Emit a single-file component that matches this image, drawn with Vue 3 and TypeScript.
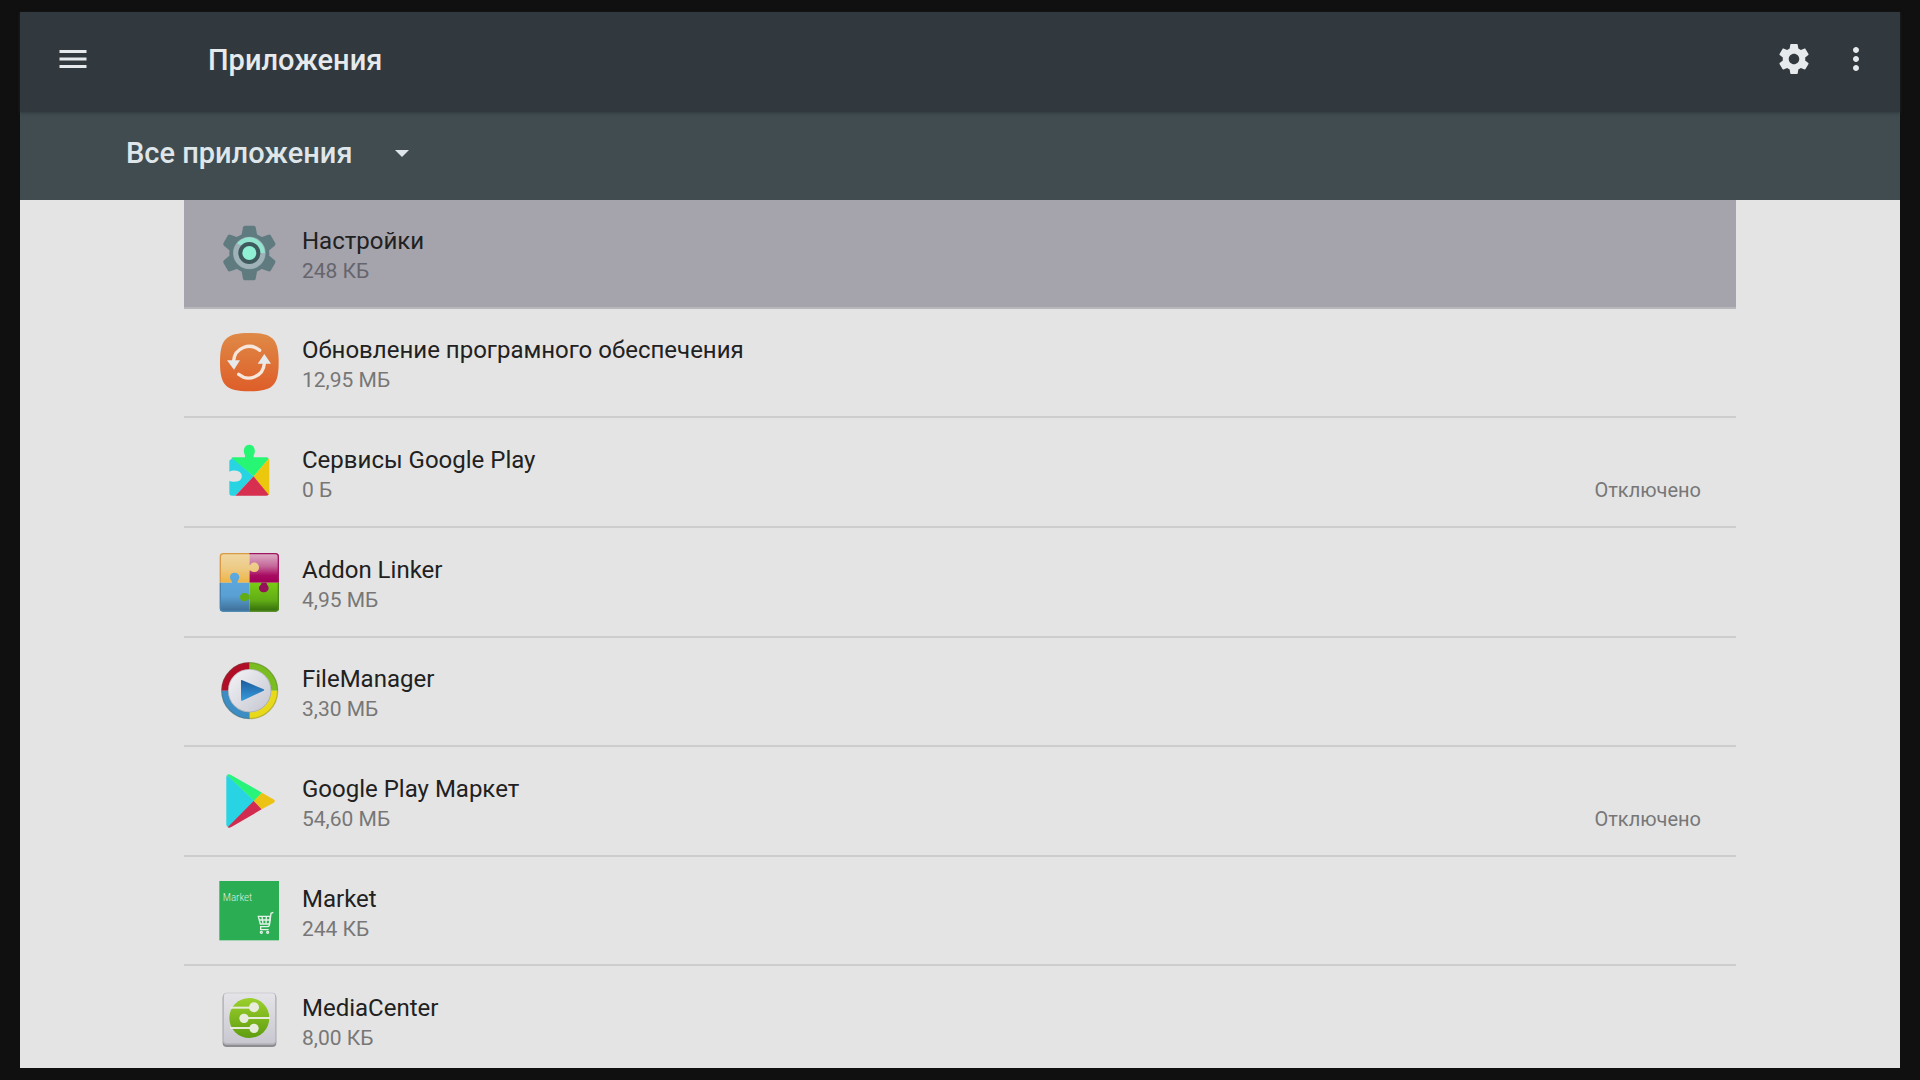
<script setup lang="ts">
import { ref } from 'vue'

type IconName = 'settings' | 'update' | 'services' | 'addon' | 'files' | 'play' | 'market' | 'media'

interface AppItem {
  icon: IconName
  name: string
  size: string
  status?: string
}

const apps: AppItem[] = [
  { icon: 'settings', name: 'Настройки', size: '248 КБ' },
  { icon: 'update', name: 'Обновление програмного обеспечения', size: '12,95 МБ' },
  { icon: 'services', name: 'Сервисы Google Play', size: '0 Б', status: 'Отключено' },
  { icon: 'addon', name: 'Addon Linker', size: '4,95 МБ' },
  { icon: 'files', name: 'FileManager', size: '3,30 МБ' },
  { icon: 'play', name: 'Google Play Маркет', size: '54,60 МБ', status: 'Отключено' },
  { icon: 'market', name: 'Market', size: '244 КБ' },
  { icon: 'media', name: 'MediaCenter', size: '8,00 КБ' },
]

const filters: string[] = ['Все приложения']
const filter = ref(filters[0])
const selected = ref(0)
</script>

<template>
  <div class="screen">
    <div class="window">
      <header class="toolbar">
        <button class="icon-button" type="button">
          <svg viewBox="0 0 24 24"><path d="M3 18h18v-2H3v2zm0-5h18v-2H3v2zm0-7v2h18V6H3z" /></svg>
        </button>
        <h1 class="title">Приложения</h1>
        <button class="icon-button" type="button">
          <svg viewBox="0 0 24 24"><path d="M19.43 12.98c.04-.32.07-.64.07-.98s-.03-.66-.07-.98l2.11-1.65c.19-.15.24-.42.12-.64l-2-3.46c-.12-.22-.39-.3-.61-.22l-2.49 1c-.52-.4-1.08-.73-1.69-.98l-.38-2.65C14.46 2.18 14.25 2 14 2h-4c-.25 0-.46.18-.49.42l-.38 2.65c-.61.25-1.17.59-1.69.98l-2.49-1c-.23-.09-.49 0-.61.22l-2 3.46c-.13.22-.07.49.12.64l2.11 1.65c-.04.32-.07.65-.07.98s.03.66.07.98l-2.11 1.65c-.19.15-.24.42-.12.64l2 3.46c.12.22.39.3.61.22l2.49-1c.52.4 1.08.73 1.69.98l.38 2.65c.03.24.24.42.49.42h4c.25 0 .46-.18.49-.42l.38-2.65c.61-.25 1.17-.59 1.69-.98l2.49 1c.23.09.49 0 .61-.22l2-3.46c.12-.22.07-.49-.12-.64l-2.11-1.65zM12 15.5c-1.93 0-3.5-1.57-3.5-3.5s1.57-3.5 3.5-3.5 3.5 1.57 3.5 3.5-1.57 3.5-3.5 3.5z" /></svg>
        </button>
        <button class="icon-button" type="button">
          <svg viewBox="0 0 24 24"><path d="M12 8c1.1 0 2-.9 2-2s-.9-2-2-2-2 .9-2 2 .9 2 2 2zm0 2c-1.1 0-2 .9-2 2s.9 2 2 2 2-.9 2-2-.9-2-2-2zm0 6c-1.1 0-2 .9-2 2s.9 2 2 2 2-.9 2-2-.9-2-2-2z" /></svg>
        </button>
      </header>

      <div class="filter-bar">
        <label class="filter">
          <select v-model="filter" class="filter-select">
            <option v-for="f in filters" :key="f" :value="f">{{ f }}</option>
          </select>
          <svg class="caret" viewBox="0 0 14 7"><path d="M0 0h14L7 7z" /></svg>
        </label>
      </div>

      <main class="content">
        <ul class="list">
          <li v-for="(app, i) in apps" :key="app.name" class="item">
            <button class="row" :class="{ selected: i === selected }" type="button" @click="selected = i">
              <svg v-if="app.icon === 'settings'" class="app-icon" viewBox="27 23 180 180">
                <g fill="#5f7b80">
                  <circle cx="118" cy="113" r="60" />
                  <g v-for="a in [0, 60, 120, 180, 240, 300]" :key="a" :transform="`rotate(${a} 118 113)`">
                    <path d="M99 36q1-5 6-5h26q5 0 6 5l5 27h-48z" />
                  </g>
                </g>
                <circle cx="118" cy="113" r="49" fill="#8f9fa6" />
                <circle cx="118" cy="113" r="40" fill="none" stroke="#9fb2b8" stroke-width="15" />
                <path d="M81 84A47 47 0 0 1 165 113H150A32 32 0 0 0 95 91z" fill="#92e4cf" />
                <circle cx="118" cy="113" r="33" fill="#3f5a5c" />
                <circle cx="118" cy="113" r="21" fill="#8ff0d4" />
              </svg>

              <svg v-else-if="app.icon === 'update'" class="app-icon" viewBox="27 36 180 180">
                <defs>
                  <linearGradient id="updateFill" x1="0" y1="0" x2="0" y2="1">
                    <stop offset="0" stop-color="#df8a47" />
                    <stop offset="1" stop-color="#de5d28" />
                  </linearGradient>
                </defs>
                <path d="M118 39C188 39 206 57 206 127S188 214 118 214 30 197 30 127 48 39 118 39z" fill="url(#updateFill)" />
                <g fill="none" stroke="#f6e6dc" stroke-width="10" stroke-linecap="round">
                  <path d="M149 91A47 47 0 0 0 71 122" />
                  <path d="M86 163A47 47 0 0 0 163 130" />
                </g>
                <path d="M51 121h39l-18 28zM143 131h40l-20-29z" fill="#e6eaec" />
              </svg>

              <svg v-else-if="app.icon === 'services'" class="app-icon" viewBox="27 35 180 180">
                <path d="M58 91L68 82 131 138 76 196H66Q58 196 58 188V151C65 155 78 156 88 151 98 144 98 131 88 124 78 119 65 120 58 124z" fill="#29d4e2" />
                <path d="M64 82Q66 81 70 81H105V74C98 64 101 43 118 43S138 64 131 74V81H168Q174 81 176 85L131 138z" fill="#27f574" />
                <path d="M176 85Q178 87 178 91V188Q178 192 175 194L131 138z" fill="#ebc80d" />
                <path d="M131 138L176 193Q173 196 168 196H76z" fill="#d62f50" />
              </svg>

              <svg v-else-if="app.icon === 'addon'" class="app-icon" viewBox="27 33 180 180">
                <defs>
                  <linearGradient id="addonYellow" x1="0" y1="0" x2="0" y2="1">
                    <stop offset="0" stop-color="#f0d7a4" /><stop offset="0.5" stop-color="#edcb86" /><stop offset="1" stop-color="#efb444" />
                  </linearGradient>
                  <linearGradient id="addonPink" x1="0" y1="0" x2="0" y2="1">
                    <stop offset="0" stop-color="#dfb3c8" /><stop offset="0.45" stop-color="#c46699" /><stop offset="0.75" stop-color="#a80c62" /><stop offset="1" stop-color="#a00058" />
                  </linearGradient>
                  <linearGradient id="addonBlue" x1="0" y1="0" x2="0" y2="1">
                    <stop offset="0" stop-color="#5aaae0" /><stop offset="0.6" stop-color="#5aa0d4" /><stop offset="1" stop-color="#3d6d94" />
                  </linearGradient>
                  <linearGradient id="addonGreen" x1="0" y1="0" x2="0" y2="1">
                    <stop offset="0" stop-color="#78cc14" /><stop offset="0.6" stop-color="#62ad16" /><stop offset="1" stop-color="#326a0c" />
                  </linearGradient>
                  <clipPath id="addonClip"><rect x="29" y="36" width="178" height="176" rx="10" /></clipPath>
                </defs>
                <g clip-path="url(#addonClip)">
                  <path d="M118 36H207V125H118z" fill="url(#addonPink)" />
                  <path d="M29 36H118V73C122 73 122 66 129 65 142 63 147 72 147 80S141 94 131 93C124 92 122 87 118 89V125H29z" fill="url(#addonYellow)" />
                  <path d="M118 125H207V212H118z" fill="url(#addonGreen)" />
                  <path d="M29 125H66C67 119 60 118 60 108 60 99 66 95 74 95S88 100 88 108C88 117 81 119 83 125H118V212H29z" fill="url(#addonBlue)" />
                  <path d="M119 161C113 162 112 156 105 156 96 155 90 161 90 168S94 181 104 181C112 180 114 174 119 175z" fill="#62ad16" />
                  <path d="M154 125C156 132 147 133 147 141 147 149 154 154 162 154S176 148 176 141C176 133 169 132 170 125z" fill="#96105a" />
                </g>
                <path d="M118 38H40Q31 38 31 47V124" fill="none" stroke="#d99a45" stroke-width="4" />
                <path d="M118 38H196Q205 38 205 47V124" fill="none" stroke="#a01660" stroke-width="4" />
                <path d="M31 125V201Q31 210 40 210H118" fill="none" stroke="#4481b0" stroke-width="4" />
                <path d="M118 210H196Q205 210 205 201V125" fill="none" stroke="#4d881b" stroke-width="4" />
              </svg>

              <svg v-else-if="app.icon === 'files'" class="app-icon" viewBox="27 33 180 180">
                <defs>
                  <linearGradient id="filesDisc" x1="0" y1="0" x2="1" y2="1">
                    <stop offset="0" stop-color="#f5f5f8" /><stop offset="1" stop-color="#c3c5cf" />
                  </linearGradient>
                  <linearGradient id="filesArrow" x1="0" y1="0" x2="0" y2="1">
                    <stop offset="0" stop-color="#1d5c9e" /><stop offset="1" stop-color="#369bdc" />
                  </linearGradient>
                </defs>
                <circle cx="119" cy="122" r="66" fill="url(#filesDisc)" />
                <g fill="none" stroke-width="20">
                  <path d="M44 122A75 75 0 0 1 119 47" stroke="#b20d27" />
                  <path d="M119 47A75 75 0 0 1 194 122" stroke="#79bd20" />
                  <path d="M194 122A75 75 0 0 1 119 197" stroke="#e8d91a" />
                  <path d="M119 197A75 75 0 0 1 44 122" stroke="#3c8dc3" />
                </g>
                <circle cx="119" cy="122" r="84" fill="none" stroke="#555b40" stroke-opacity="0.3" stroke-width="4" />
                <circle cx="119" cy="122" r="64" fill="none" stroke="#666" stroke-opacity="0.3" stroke-width="3" />
                <path d="M93 91Q94 89 97 91L161 118Q164 120 161 122L97 152Q93 153 93 150z" fill="url(#filesArrow)" />
              </svg>

              <svg v-else-if="app.icon === 'play'" class="app-icon" viewBox="27 31 180 180">
                <path d="M52 43L134 121 55 200Q49 198 49 191V50Q49 44 52 43z" fill="#28d3e3" />
                <path d="M51 43Q55 39 63 43L156 96 133 121z" fill="#29f47a" />
                <path d="M156 96L190 116Q199 121 190 127L155 146 131 121z" fill="#edc313" />
                <path d="M131 121L155 146 64 199Q57 203 53 200z" fill="#d22b4f" />
              </svg>

              <svg v-else-if="app.icon === 'market'" class="app-icon" viewBox="27 30 180 180">
                <rect x="28" y="30" width="179" height="178" fill="#2bad54" />
                <text class="market-text" x="38" y="90">Market</text>
                <g fill="none" stroke="#e3f3e7" stroke-width="4">
                  <path d="M190 124L183 127 178 163Q177 167 171 167H150" />
                  <path d="M145 136H181L178 159H151z" />
                  <path d="M147 147H179M156 137L159 158M169 137L168 158M152 167V176H176" />
                  <circle cx="154" cy="184" r="3" /><circle cx="173" cy="184" r="3" />
                </g>
              </svg>

              <svg v-else class="app-icon" viewBox="117 59 180 180">
                <defs>
                  <linearGradient id="mediaPlate" x1="0" y1="0" x2="0" y2="1">
                    <stop offset="0" stop-color="#e4e4e8" /><stop offset="1" stop-color="#c9c8d0" />
                  </linearGradient>
                  <linearGradient id="mediaGreen" x1="0" y1="0" x2="0" y2="1">
                    <stop offset="0" stop-color="#9bd02c" /><stop offset="1" stop-color="#5f9d10" />
                  </linearGradient>
                </defs>
                <rect x="128" y="70" width="161" height="160" rx="12" fill="#8d8c92" />
                <rect x="129" y="67" width="159" height="156" rx="11" fill="#b9b8be" />
                <rect x="132" y="69" width="153" height="149" rx="8" fill="url(#mediaPlate)" />
                <circle cx="208" cy="143" r="60" fill="url(#mediaGreen)" />
                <g fill="none" stroke="#e8ecdc" stroke-width="6">
                  <path d="M151 112H205L215 112" /><path d="M193 143H270" /><path d="M150 173H215" />
                </g>
                <g fill="#e8ecdc">
                  <circle cx="222" cy="111" r="15" /><circle cx="192" cy="144" r="14" /><circle cx="222" cy="174" r="14" />
                </g>
              </svg>

              <span class="texts">
                <span class="name">{{ app.name }}</span>
                <span class="details">
                  <span>{{ app.size }}</span>
                  <span v-if="app.status" class="status">{{ app.status }}</span>
                </span>
              </span>
            </button>
          </li>
        </ul>
      </main>
    </div>
  </div>
</template>

<style>
body {
  margin: 0;
  background: #101010;
}
</style>

<style scoped>
.screen {
  box-sizing: border-box;
  height: 100vh;
  padding: 12px 20px;
  background: #101010;
  font-family: Roboto, "Noto Sans", sans-serif;
}

.window {
  display: flex;
  flex-direction: column;
  height: 100%;
  background: #e4e4e4;
}

button {
  border: 0;
  padding: 0;
  background: none;
  font: inherit;
  color: inherit;
  cursor: pointer;
}

.toolbar {
  position: relative;
  z-index: 2;
  box-sizing: border-box;
  display: flex;
  align-items: center;
  flex: none;
  height: 100px;
  padding: 0 26px 6px 35px;
  background: #32393e;
  color: #e6eaed;
  box-shadow: 0 1px 3px rgba(40, 48, 52, 0.7);
}

.icon-button {
  width: 36px;
  height: 36px;
}

.icon-button + .icon-button {
  margin-left: 26px;
}

.icon-button svg {
  display: block;
  width: 36px;
  height: 36px;
  fill: currentColor;
}

.title {
  flex: 1;
  margin: 2px 0 0 117px;
  font-size: 29px;
  font-weight: 500;
  line-height: 36px;
}

.filter-bar {
  position: relative;
  z-index: 1;
  box-sizing: border-box;
  display: flex;
  align-items: center;
  flex: none;
  height: 88px;
  padding: 0 106px 6px;
  background: #404c50;
  color: #dfe6ea;
}

.filter {
  display: flex;
  align-items: center;
  gap: 42px;
}

.filter-select {
  appearance: none;
  border: 0;
  padding: 0;
  background: none;
  color: inherit;
  font-family: inherit;
  font-size: 29px;
  font-weight: 500;
  line-height: 36px;
}

.caret {
  width: 14px;
  height: 7px;
  fill: currentColor;
}

.content {
  display: flex;
  flex: 1;
  min-height: 0;
  padding: 0 164px;
  overflow: hidden;
}

.list {
  display: grid;
  grid-auto-rows: minmax(84px, 1fr);
  flex: 1;
  margin: -1px 0 -8px;
  padding: 0;
  list-style: none;
}

.item {
  display: flex;
}

.row {
  display: flex;
  align-items: center;
  gap: 23px;
  flex: 1;
  padding: 0 35px;
  border-bottom: 2px solid #cdcdcd;
  color: #212121;
  text-align: left;
}

.row.selected {
  border-bottom-color: #b8b7bc;
  background: #a5a3ac;
}

.app-icon {
  flex: none;
  width: 60px;
  height: 60px;
}

.market-text {
  font-family: "Roboto Condensed", Roboto, sans-serif;
  font-size: 33px;
  font-weight: 300;
  fill: #d8efdf;
}

.texts {
  display: flex;
  flex-direction: column;
  flex: 1;
  padding-top: 4px;
}

.name {
  font-size: 24px;
  line-height: 32px;
}

.details {
  display: flex;
  align-items: baseline;
  justify-content: space-between;
  color: #777;
  font-size: 21px;
  line-height: 28px;
}

.status {
  font-size: 20px;
}

.selected .details {
  color: #66656c;
}
</style>
